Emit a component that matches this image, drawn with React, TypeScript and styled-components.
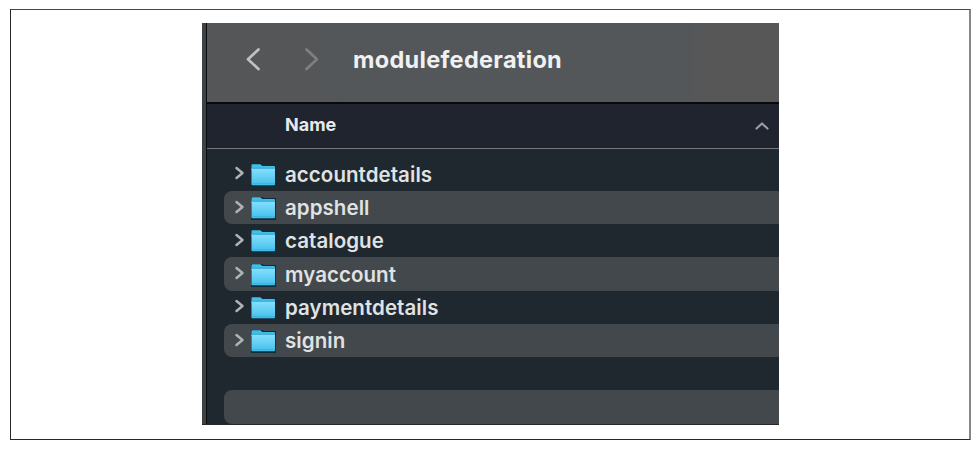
import React from "react";
import styled, { createGlobalStyle } from "styled-components";

const GlobalStyle = createGlobalStyle`
  html, body { margin: 0; background: #fff; }
  * { box-sizing: border-box; }
`;

const Page = styled.main`
  width: 980px;
  height: 449px;
  padding: 9px 9px 9px 10px;
  overflow: hidden;
  font-family: Inter, "Liberation Sans", sans-serif;
`;

const Frame = styled.section`
  height: 431px;
  padding: 13px 0 0 191px;
  border: 1px solid #29292b;
  border-top-color: #454547;
  border-right: 2px solid #858687;
`;

const FinderWindow = styled.div`
  width: 577px;
  height: 402px;
  display: flex;
  overflow: hidden;
  background: #1e282e;
  border-bottom: 1px solid #27292e;
`;

const SideEdge = styled.div`
  flex: 0 0 5px;
  background: #404143;
  border-right: 1px solid #090d12;
`;

const Content = styled.div`
  flex: 1;
  min-width: 0;
`;

const Toolbar = styled.header`
  height: 81px;
  display: flex;
  align-items: flex-start;
  padding: 21px 0 0 37px;
  background: linear-gradient(90deg, #555657, #53575a 35%, #53575a 83%, #575758 88%);
  border-bottom: 2px solid #07090d;
`;

const NavIcon = styled.svg<{ $dim?: boolean; $gap: number }>`
  width: 20px;
  height: 30px;
  margin-right: ${({ $gap }) => $gap}px;
  fill: none;
  stroke: ${({ $dim }) => ($dim ? "#7d8082" : "#bfc1c2")};
  stroke-width: 2.7;
  stroke-linecap: round;
  stroke-linejoin: round;
`;

const Title = styled.h1`
  margin: 0;
  font-size: 23.5px;
  line-height: 31px;
  font-weight: 700;
  letter-spacing: 0.3px;
  color: #f0f0f1;
`;

const ColumnHeader = styled.div`
  height: 45px;
  display: flex;
  align-items: center;
  justify-content: space-between;
  padding: 0 9px 3px 78px;
  background: #1f242f;
  border-bottom: 1px solid #747980;
  color: #e8e9ea;
  font-size: 18px;
  font-weight: 700;
`;

const SortIcon = styled.svg`
  width: 16px;
  height: 10px;
  margin-top: 3px;
  fill: none;
  stroke: #999ca2;
  stroke-width: 2.2;
  stroke-linecap: round;
  stroke-linejoin: round;
`;

const List = styled.ul`
  margin: 0;
  padding: 8.7px 0 0 17px;
  list-style: none;
`;

const Row = styled.li<{ $striped: boolean }>`
  height: 33.25px;
  display: flex;
  align-items: center;
  padding-left: 10px;
  border-radius: 8px 0 0 8px;
  background: ${({ $striped }) => ($striped ? "#42484b" : "transparent")};
`;

const Disclosure = styled.svg`
  width: 12px;
  height: 16px;
  margin: -2px 5px 0 0;
  fill: none;
  stroke: #afb3b5;
  stroke-width: 2.5;
  stroke-linecap: round;
  stroke-linejoin: round;
`;

const FolderSvg = styled.svg`
  width: 25px;
  height: 24px;
  margin: 1px 9px 0 0;
`;

const Name = styled.span`
  font-size: 20.5px;
  line-height: 24px;
  padding-top: 1px;
  font-weight: 600;
  letter-spacing: 0.06px;
  color: #e0e2e3;
`;

const Folder = () => (
  <FolderSvg viewBox="0 0 25 24">
    <defs>
      <linearGradient id="folderFace" x1="0" y1="0" x2="0" y2="1">
        <stop offset="0" stopColor="#85dfff" />
        <stop offset="1" stopColor="#43bfe9" />
      </linearGradient>
    </defs>
    <path d="M0 1h11l2 1h12v22H0z" fill="#0b2e3e" />
    <path d="M.5 2.3q0-1 1-1h7.8l2 1.6H23q1 0 1 1V7H.5z" fill="#43bfe7" />
    <path d="M.5 5.5H24v15.8q0 1-1 1H1.5q-1 0-1-1z" fill="url(#folderFace)" />
    <path d="M.5 5.2H24" stroke="#329dc4" strokeWidth=".8" />
    <path d="M.5 20.7H24" stroke="#36aeda" strokeWidth=".8" />
  </FolderSvg>
);

const entries = ["accountdetails", "appshell", "catalogue", "myaccount", "paymentdetails", "signin", "", ""];

export default function App() {
  return (
    <>
      <GlobalStyle />
      <Page>
        <Frame>
          <FinderWindow>
            <SideEdge />
            <Content>
              <Toolbar>
                <NavIcon $gap={38} viewBox="0 0 20 30">
                  <path d="M14.5 5.5 4 15.3l10.5 9.8" />
                </NavIcon>
                <NavIcon $gap={31} $dim viewBox="0 0 20 30">
                  <path d="M4.5 5.5 15 15.3 4.5 25.1" />
                </NavIcon>
                <Title>modulefederation</Title>
              </Toolbar>
              <ColumnHeader>
                <span>Name</span>
                <SortIcon viewBox="0 0 16 10">
                  <path d="m2.5 7.5 5.5-5 5.5 5" />
                </SortIcon>
              </ColumnHeader>
              <List>
                {entries.map((name, index) => (
                  <Row key={index} $striped={index % 2 === 1}>
                    {name && (
                      <>
                        <Disclosure viewBox="0 0 12 16">
                          <path d="m2.5 3 6 5-6 5" />
                        </Disclosure>
                        <Folder />
                        <Name>{name}</Name>
                      </>
                    )}
                  </Row>
                ))}
              </List>
            </Content>
          </FinderWindow>
        </Frame>
      </Page>
    </>
  );
}
